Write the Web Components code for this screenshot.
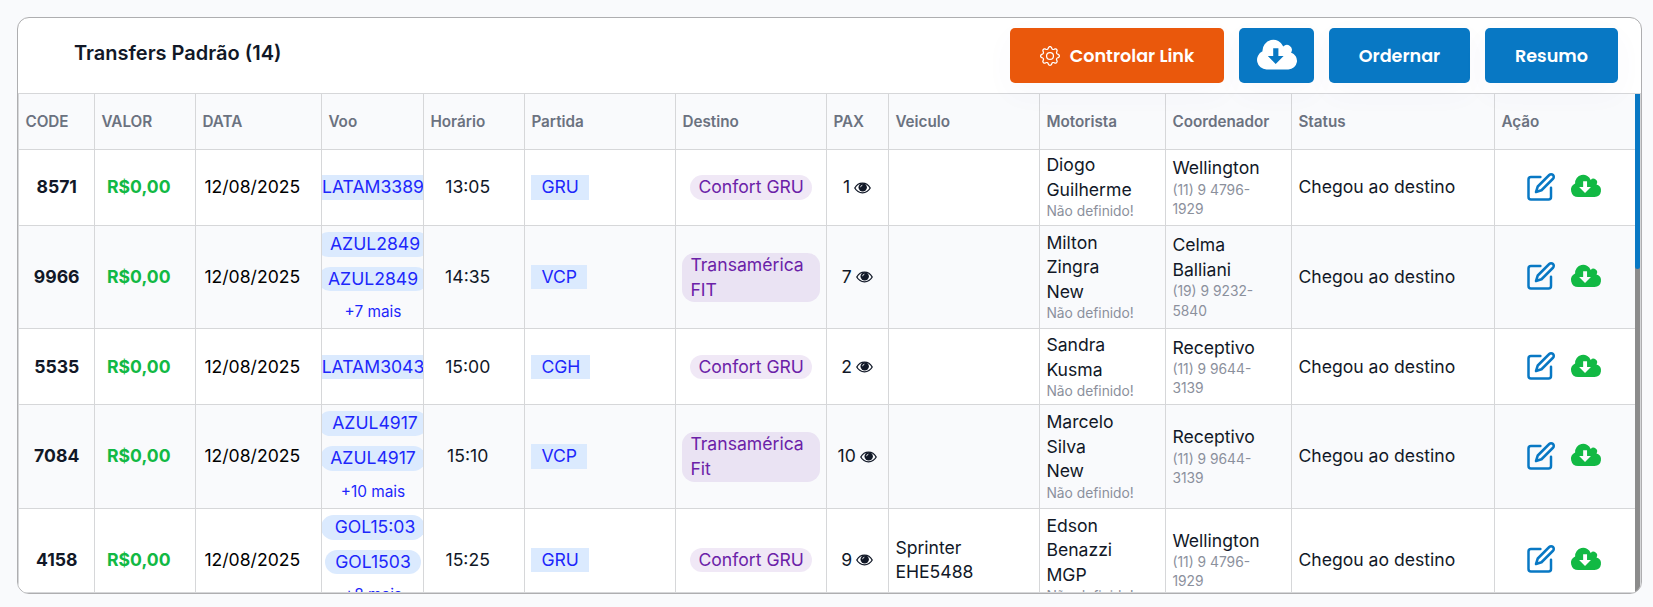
<!DOCTYPE html>
<html lang="pt-BR">
<head>
<meta charset="UTF-8">
<title>Transfers</title>
<style>
    body {
        margin: 0;
        height: 607px;
        overflow: hidden;
        background: #f9fafc;
        color: #111827;
        font-family: Inter, "Liberation Sans", sans-serif;
        font-size: 17.6px;
    }
</style>
</head>
<body>
<transfer-panel heading="Transfers Padrão (14)">
    <action-button slot="actions" color="#ea580c" style="width: 214px"><app-icon name="gear" style="width: 20px"></app-icon>Controlar Link</action-button>
    <action-button slot="actions" style="width: 75px"><app-icon name="cloud" style="width: 40px; margin-top: -2px"></app-icon></action-button>
    <action-button slot="actions" style="width: 141px">Ordernar</action-button>
    <action-button slot="actions" style="width: 133px">Resumo</action-button>
    <transfer-table></transfer-table>
</transfer-panel>

<script>
const ICONS = {
    gear: `<svg viewBox="0 0 16 16" fill="currentColor"><path d="M8 4.754a3.246 3.246 0 1 0 0 6.492 3.246 3.246 0 0 0 0-6.492zM5.754 8a2.246 2.246 0 1 1 4.492 0 2.246 2.246 0 0 1-4.492 0z"/><path d="M9.796 1.343c-.527-1.79-3.065-1.79-3.592 0l-.094.319a.873.873 0 0 1-1.255.52l-.292-.16c-1.64-.892-3.433.902-2.54 2.541l.159.292a.873.873 0 0 1-.52 1.255l-.319.094c-1.79.527-1.79 3.065 0 3.592l.319.094a.873.873 0 0 1 .52 1.255l-.16.292c-.892 1.64.901 3.434 2.541 2.54l.292-.159a.873.873 0 0 1 1.255.52l.094.319c.527 1.79 3.065 1.79 3.592 0l.094-.319a.873.873 0 0 1 1.255-.52l.292.16c1.64.893 3.434-.902 2.54-2.541l-.159-.292a.873.873 0 0 1 .52-1.255l.319-.094c1.79-.527 1.79-3.065 0-3.592l-.319-.094a.873.873 0 0 1-.52-1.255l.16-.292c.893-1.64-.902-3.433-2.541-2.54l-.292.159a.873.873 0 0 1-1.255-.52l-.094-.319zm-2.633.283c.246-.835 1.428-.835 1.674 0l.094.319a1.873 1.873 0 0 0 2.693 1.115l.291-.16c.764-.415 1.6.42 1.184 1.185l-.159.292a1.873 1.873 0 0 0 1.116 2.692l.318.094c.835.246.835 1.428 0 1.674l-.319.094a1.873 1.873 0 0 0-1.115 2.693l.16.291c.415.764-.42 1.6-1.185 1.184l-.291-.159a1.873 1.873 0 0 0-2.693 1.116l-.094.318c-.246.835-1.428.835-1.674 0l-.094-.319a1.873 1.873 0 0 0-2.692-1.115l-.292.16c-.764.415-1.6-.42-1.184-1.185l.159-.291A1.873 1.873 0 0 0 1.945 8.93l-.319-.094c-.835-.246-.835-1.428 0-1.674l.319-.094A1.873 1.873 0 0 0 3.06 4.377l-.16-.292c-.415-.764.42-1.6 1.185-1.184l.292.159a1.873 1.873 0 0 0 2.692-1.115l.094-.319z"/></svg>`,
    cloud: `<svg viewBox="0 0 40 29.4" fill="currentColor"><path fill-rule="evenodd" d="M9.5 29.4A9.5 9.5 0 0 1 5.5 11.3A10.8 10.8 0 0 1 26.3 6.6A4.9 4.9 0 0 1 34 12.6A8.6 8.6 0 0 1 31.4 29.4ZM16.2 8.2V16H10.8L18.7 24L26.6 16H21.4V8.2Z"/></svg>`,
    edit: `<svg viewBox="0 0 24 24" fill="none" stroke="currentColor" stroke-width="2" stroke-linecap="round" stroke-linejoin="round"><path d="M11.5 4H4a2 2 0 0 0-2 2v14a2 2 0 0 0 2 2h14a2 2 0 0 0 2-2v-7.5"/><path d="M18.6 2.4a2.1 2.1 0 0 1 3 3L12.4 14.6L8 16L9.4 11.6Z"/></svg>`,
    eye: `<svg viewBox="0 0 17 12"><path d="M.8 6C4.4-.4 12.6-.4 16.2 6C12.6 12.4 4.4 12.4.8 6Z" fill="none" stroke="currentColor" stroke-width="1.3"/><circle cx="8.7" cy="5.4" r="4.2" fill="currentColor"/><path d="M6.6 5.2a2.1 2.1 0 0 1 1.8-2" fill="none" stroke="#fff" stroke-width=".8"/></svg>`
};

class AppIcon extends HTMLElement {
    constructor() {
        super();
        this.attachShadow({ mode: 'open' });
    }

    connectedCallback() {
        this.shadowRoot.innerHTML = `
            <style>
                :host { display: inline-block; flex: none; }
                svg { display: block; width: 100%; overflow: visible; }
            </style>
            ${ICONS[this.getAttribute('name')]}
        `;
    }
}

class ActionButton extends HTMLElement {
    constructor() {
        super();
        this.attachShadow({ mode: 'open' });
    }

    connectedCallback() {
        this.shadowRoot.innerHTML = `
            <style>
                :host { display: block; height: 55px; }
                button {
                    display: flex;
                    align-items: center;
                    justify-content: center;
                    gap: 10px;
                    width: 100%;
                    height: 100%;
                    padding: 0;
                    border: 0;
                    border-radius: 5px;
                    background: ${this.getAttribute('color') || '#0878c4'};
                    box-shadow: 0 10px 30px rgba(80, 90, 180, .035);
                    color: #fff;
                    font: 600 17.6px Poppins, Lato, sans-serif;
                    white-space: nowrap;
                }
            </style>
            <button><slot></slot></button>
        `;
    }
}

class TransferPanel extends HTMLElement {
    constructor() {
        super();
        this.attachShadow({ mode: 'open' });
    }

    connectedCallback() {
        this.shadowRoot.innerHTML = `
            <style>
                :host {
                    display: flex;
                    flex-direction: column;
                    box-sizing: border-box;
                    width: 1625px;
                    height: 577px;
                    margin: 17px 0 0 17px;
                    border: 1px solid #aeaeb0;
                    border-radius: 12px;
                    background: #fff;
                    overflow: hidden;
                }
                header {
                    display: flex;
                    justify-content: space-between;
                    flex: none;
                    height: 75px;
                    padding: 0 23px 0 56px;
                    position: relative;
                    z-index: 1;
                }
                h2 {
                    margin: 23px 0 0;
                    font-size: 20px;
                    line-height: 24px;
                    font-weight: 600;
                }
                nav {
                    display: flex;
                    gap: 15px;
                    margin-top: 10px;
                }
            </style>
            <header>
                <h2>${this.getAttribute('heading')}</h2>
                <nav><slot name="actions"></slot></nav>
            </header>
            <slot></slot>
        `;
    }
}

class FlightTag extends HTMLElement {
    constructor() {
        super();
        this.attachShadow({ mode: 'open' });
    }

    connectedCallback() {
        this.shadowRoot.innerHTML = `
            <style>
                :host {
                    display: inline-block;
                    padding: 0 10px;
                    background: #dbeafe;
                    color: #1d27fb;
                    line-height: 24.6px;
                    white-space: nowrap;
                }
                :host([round]) { border-radius: 12.5px; }
                :host([first]) { padding-left: 14px; }
                :host([purple]) {
                    padding: 0 8px;
                    border-radius: 12.5px;
                    background: rgba(107, 33, 168, .1);
                    color: #6b21a8;
                    white-space: normal;
                }
            </style>
            <slot></slot>
        `;
    }
}

const HEADERS = ['CODE', 'VALOR', 'DATA', 'Voo', 'Horário', 'Partida', 'Destino', 'PAX', 'Veiculo', 'Motorista', 'Coordenador', 'Status', 'Ação'];

const TRANSFERS = [
    { h: 75, code: 8571, voo: ['LATAM3389'], hora: '13:05', partida: 'GRU', destino: 'Confort GRU', pax: 1, veiculo: '', motorista: 'Diogo<br>Guilherme', coord: 'Wellington', fone: '(11) 9 4796-<br>1929' },
    { h: 102, code: 9966, voo: ['AZUL2849', 'AZUL2849'], mais: 7, hora: '14:35', partida: 'VCP', destino: 'Transamérica FIT', pax: 7, veiculo: '', motorista: 'Milton<br>Zingra<br>New', coord: 'Celma<br>Balliani', fone: '(19) 9 9232-<br>5840' },
    { h: 75, code: 5535, voo: ['LATAM3043'], hora: '15:00', partida: 'CGH', destino: 'Confort GRU', pax: 2, veiculo: '', motorista: 'Sandra<br>Kusma', coord: 'Receptivo', fone: '(11) 9 9644-<br>3139' },
    { h: 103, code: 7084, voo: ['AZUL4917', 'AZUL4917'], mais: 10, hora: '15:10', partida: 'VCP', destino: 'Transamérica Fit', pax: 10, veiculo: '', motorista: 'Marcelo<br>Silva<br>New', coord: 'Receptivo', fone: '(11) 9 9644-<br>3139' },
    { h: 102, code: 4158, voo: ['GOL15:03', 'GOL1503'], mais: 8, hora: '15:25', partida: 'GRU', destino: 'Confort GRU', pax: 9, veiculo: 'Sprinter<br>EHE5488', motorista: 'Edson<br>Benazzi<br>MGP', coord: 'Wellington', fone: '(11) 9 4796-<br>1929' }
];

class TransferTable extends HTMLElement {
    constructor() {
        super();
        this.attachShadow({ mode: 'open' });
    }

    flights(t) {
        const tags = t.voo.map((v, i) => `<flight-tag ${t.mais ? 'round' : ''} ${t.mais && i === 0 ? 'first' : ''}>${v}</flight-tag>`).join('');
        return tags + (t.mais ? `<span class="more">+${t.mais} mais</span>` : '');
    }

    row(t) {
        const wide = t.destino.startsWith('Trans');
        return `
            <div class="row" style="height: ${t.h}px">
                <div class="mid"><b>${t.code}</b></div>
                <div class="valor"><b>R$0,00</b></div>
                <div class="data"><span>12/08/2025</span></div>
                <div class="voo">${this.flights(t)}</div>
                <div class="hora"><span>${t.hora}</span></div>
                <div><flight-tag>${t.partida}</flight-tag></div>
                <div class="${wide ? 'wide' : 'mid'}"><flight-tag purple>${t.destino}</flight-tag></div>
                <div class="pax"><span>${t.pax}</span><app-icon name="eye" style="width: 17px"></app-icon></div>
                <div><span>${t.veiculo}</span></div>
                <div class="stack driver"><span>${t.motorista}</span><small>Não definido!</small></div>
                <div class="stack"><span>${t.coord}</span><small>${t.fone}</small></div>
                <div><span>Chegou ao destino</span></div>
                <div class="acao"><app-icon name="edit" style="width: 30px; color: #0878c4"></app-icon><app-icon name="cloud" style="width: 30px; color: #12b944"></app-icon></div>
            </div>
        `;
    }

    connectedCallback() {
        this.shadowRoot.innerHTML = `
            <style>
                :host {
                    display: flex;
                    flex: none;
                    box-sizing: border-box;
                    height: 500px;
                    border: 1px solid #d6d7d9;
                    border-left: 0;
                    line-height: 24.5px;
                }
                .rows { width: 1617px; height: 498px; overflow: hidden; }
                .row {
                    display: grid;
                    grid-template-columns: 76px 101px 126px 102px 101px 151px 151px 62px 151px 126px 126px 203px 141px;
                    border-bottom: 1px solid #d6d7d9;
                    background: #fff;
                }
                .row:nth-child(odd) { background: #f9fafc; }
                .row > div {
                    display: flex;
                    align-items: center;
                    box-sizing: border-box;
                    min-width: 0;
                    padding: 0 6px 0 6.4px;
                    border-left: 1px solid #d6d7d9;
                    overflow: hidden;
                }
                .row:nth-child(4) > div { padding-top: 1px; }
                .row.head { height: 55px; color: #6b7280; font-size: 15.25px; font-weight: 600; }
                .row.head > div { padding-top: 2px; }
                .row > .mid, .row > .acao, .row > .pax { justify-content: center; }
                .row > .valor { padding-left: 12px; color: #12b944; }
                .row > .data { padding-left: 8.4px; color: #000; }
                .row > .hora { justify-content: center; padding-right: 19px; }
                .row > .wide { padding-top: 1px; }
                .row > .voo {
                    flex-direction: column;
                    justify-content: center;
                    gap: 10px;
                    padding-left: 1px;
                    padding-right: 0;
                }
                .row > .voo:has(.more) { padding-top: 1px; }
                .more { color: #1d27fb; font-size: 15.4px; line-height: 22px; }
                .row > .pax { gap: 4px; padding-right: 7px; }
                .row > .stack { flex-direction: column; align-items: flex-start; justify-content: center; }
                .row > .acao { gap: 15px; padding: 0 3px 2px 0; }
                small { color: #8b909c; font-size: 13.8px; line-height: 19.2px; white-space: nowrap; }
                .driver small { line-height: 18.6px; }
                .row:nth-child(2) > .driver { padding-bottom: 1px; }
                .track { width: 5px; height: 498px; background: #8b8b8b; }
                .thumb { height: 175px; border-radius: 0 0 3px 3px; background: #0878c4; }
            </style>
            <div class="rows">
                <div class="row head">${HEADERS.map(h => `<div>${h}</div>`).join('')}</div>
                ${TRANSFERS.map(t => this.row(t)).join('')}
            </div>
            <div class="track"><div class="thumb"></div></div>
        `;
    }
}

customElements.define('app-icon', AppIcon);
customElements.define('action-button', ActionButton);
customElements.define('flight-tag', FlightTag);
customElements.define('transfer-table', TransferTable);
customElements.define('transfer-panel', TransferPanel);
</script>
</body>
</html>
